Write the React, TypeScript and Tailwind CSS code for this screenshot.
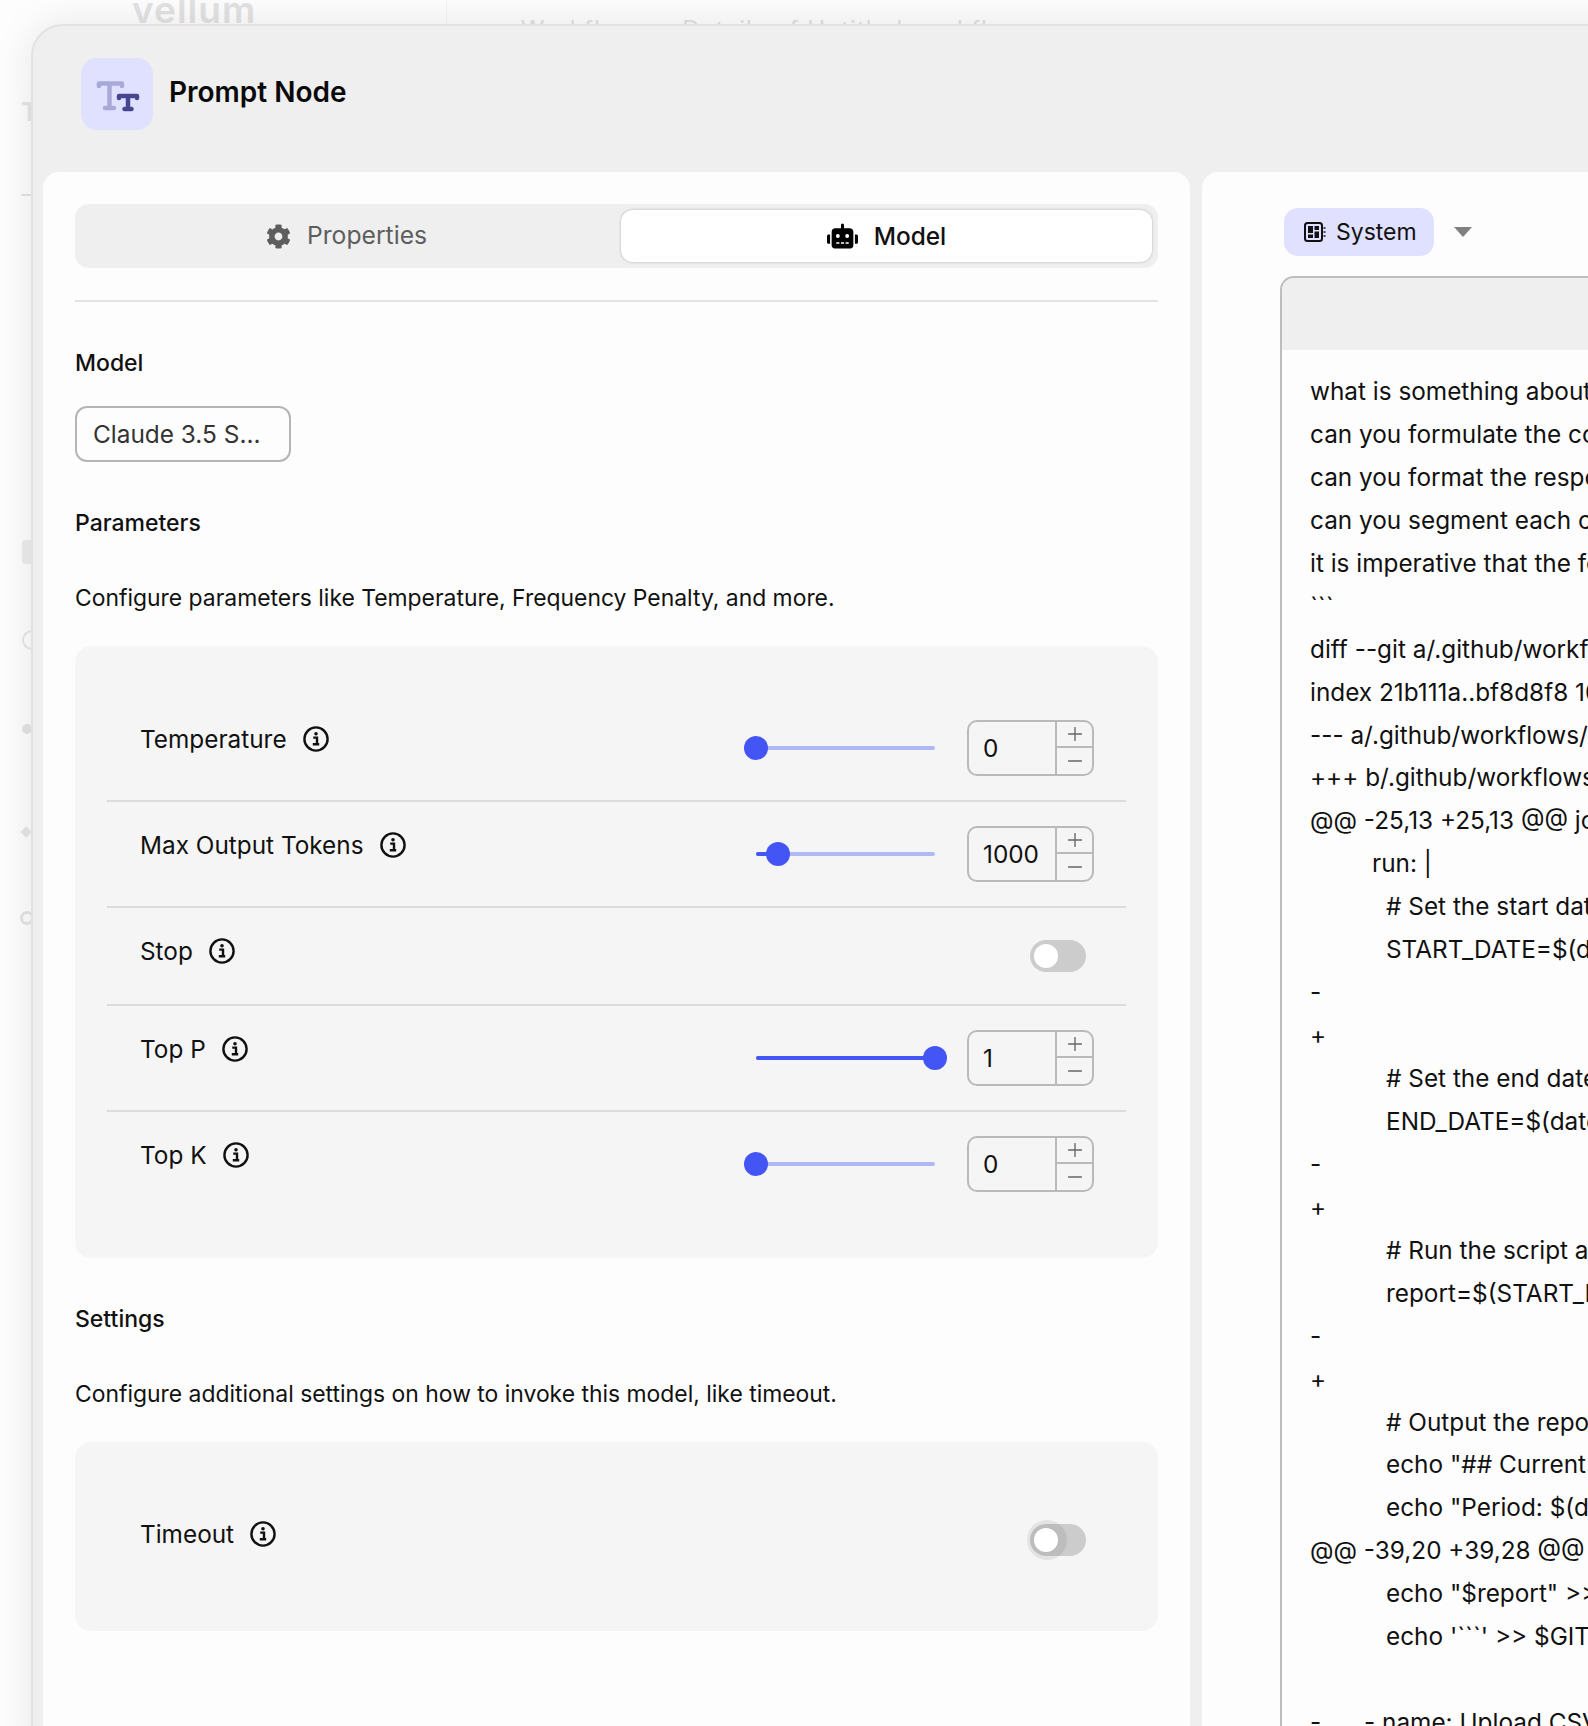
import { Minus, Plus } from 'lucide-react';
import { FaCog, FaRobot } from 'react-icons/fa';

type SliderRow = { label: string; value: string; fraction: number };

const editorLines: { text: string; indent?: string }[] = [
  { text: 'what is something about this change' },
  { text: 'can you formulate the comment' },
  { text: 'can you format the response' },
  { text: 'can you segment each change' },
  { text: 'it is imperative that the format' },
  { text: '```' },
  { text: 'diff --git a/.github/workflows/report.yml' },
  { text: 'index 21b111a..bf8d8f8 100644' },
  { text: '--- a/.github/workflows/report.yml' },
  { text: '+++ b/.github/workflows/report.yml' },
  { text: '@@ -25,13 +25,13 @@ jobs:' },
  { text: 'run: |', indent: 'pl-[62px]' },
  { text: '# Set the start date', indent: 'pl-[76px]' },
  { text: 'START_DATE=$(date', indent: 'pl-[76px]' },
  { text: '-' },
  { text: '+' },
  { text: '# Set the end date', indent: 'pl-[76px]' },
  { text: 'END_DATE=$(date', indent: 'pl-[76px]' },
  { text: '-' },
  { text: '+' },
  { text: '# Run the script and', indent: 'pl-[76px]' },
  { text: 'report=$(START_DATE', indent: 'pl-[76px]' },
  { text: '-' },
  { text: '+' },
  { text: '# Output the report', indent: 'pl-[76px]' },
  { text: 'echo "## Current', indent: 'pl-[76px]' },
  { text: 'echo "Period: $(date', indent: 'pl-[76px]' },
  { text: '@@ -39,20 +39,28 @@ jobs:' },
  { text: 'echo "$report" >> $GITHUB', indent: 'pl-[76px]' },
  { text: "echo '```' >> $GITHUB", indent: 'pl-[76px]' },
  { text: '' },
];

function InfoIcon() {
  return (
    <svg viewBox="0 0 26 26" className="h-[26px] w-[26px] shrink-0" fill="none">
      <circle cx="13" cy="13" r="11.6" stroke="#111" strokeWidth="2.400" />
      <circle cx="13" cy="7.800" r="1.800" fill="#111" />
      <path d="M10.200 11.600h3.800v6.200M9.800 18.200h6.400" stroke="#111" strokeWidth="2.400" />
    </svg>
  );
}

function TextSizeIcon() {
  return (
    <svg viewBox="0 0 72 72" className="h-[72px] w-[72px]" fill="none" strokeLinecap="round" strokeLinejoin="round">
      <path d="M18 28v-2.500h23V28M28.500 26v24M24 50h9" stroke="#a9a9d9" strokeWidth="4.500" />
      <path d="M38 40v-2h18v2M47 38v13M43.500 51h7" stroke="#47478f" strokeWidth="4.500" />
    </svg>
  );
}

function SystemIcon() {
  return (
    <svg viewBox="0 0 22 20" className="h-[20px] w-[22px] shrink-0" fill="none">
      <rect x="1" y="1" width="17" height="18" rx="2.500" stroke="#111" strokeWidth="2" />
      <path d="M4 4h5v7H4zM10.500 4H15v4h-4.500zM10.500 9.500H15V16h-4.500zM4 12.500h5V16H4z" fill="#111" />
      <path d="M19.500 6h2M19.500 10h2M19.500 14h2" stroke="#111" strokeWidth="1.500" />
    </svg>
  );
}

function Label({ text }: { text: string }) {
  return (
    <div className="flex items-center gap-[16px] text-[24.35px] leading-[32px] text-[#111]">
      <span>{text}</span>
      <InfoIcon />
    </div>
  );
}

function Slider({ fraction }: { fraction: number }) {
  return (
    <div className="relative h-[24px] w-[179px]">
      <div className="absolute left-0 right-0 top-[10px] h-[4px] rounded-full bg-[#b1b9f5]" />
      <div
        className="absolute left-0 top-[10px] h-[4px] rounded-full bg-[#4356f5]"
        style={{ width: `${fraction * 100}%` }}
      />
      <div
        className="absolute top-0 h-[24px] w-[24px] rounded-full bg-[#4356f5]"
        style={{ left: `${fraction * 179 - 12}px` }}
      />
    </div>
  );
}

function NumberInput({ value }: { value: string }) {
  return (
    <div className="flex h-[56px] w-[127px] overflow-hidden rounded-[10px] border-2 border-[#bababa]">
      <div className="flex-1 pl-[14px] text-[24.35px] leading-[52px] text-[#111]">{value}</div>
      <div className="flex w-[37px] flex-col border-l-2 border-[#bababa] text-[#666]">
        <div className="flex h-[26px] items-center justify-center border-b-2 border-[#bababa]">
          <Plus className="h-[22px] w-[22px]" strokeWidth={1.500} />
        </div>
        <div className="flex flex-1 items-center justify-center">
          <Minus className="h-[22px] w-[22px]" strokeWidth={1.500} />
        </div>
      </div>
    </div>
  );
}

function Toggle({ focused }: { focused?: boolean }) {
  return (
    <div className="relative h-[32px] w-[56px] rounded-full bg-[#cccccc]">
      {focused && <div className="absolute -left-[3px] -top-[4px] h-[40px] w-[40px] rounded-full bg-[#00000012]" />}
      <div className="absolute left-[4px] top-[4px] h-[24px] w-[24px] rounded-full bg-white" />
    </div>
  );
}

function ParamSlider({ row, divider }: { row: SliderRow; divider: boolean }) {
  return (
    <div className={`flex h-[106px] items-start justify-between pl-[33px] pr-[32px] pt-[24px] ${divider ? 'border-b-2 border-[#dcdcdc]' : ''}`}>
      <div className="pt-[3px]">
        <Label text={row.label} />
      </div>
      <div className="flex h-[56px] items-center gap-[32px]">
        <Slider fraction={row.fraction} />
        <NumberInput value={row.value} />
      </div>
    </div>
  );
}

export default function App() {
  return (
    <div className="relative h-[1726px] w-[1588px] overflow-hidden bg-[#fdfdfd] font-['Inter',sans-serif]">
      {/* page behind the modal, barely visible */}
      <div className="absolute left-[132px] top-[-13px] text-[37px] font-semibold leading-[46px] tracking-[1px] text-[#e2e2e2]">
        vellum
      </div>
      <div className="absolute left-[446px] top-0 h-[24px] w-px bg-[#f3f3f3]" />
      <div className="absolute left-[496px] top-[16px] text-[24px] leading-[28px] tracking-[1px] text-[#e0e0e0]">
        &gt; Workflows &gt; Details of Untitled workflow
      </div>
      <div className="absolute left-[21px] top-[96px] text-[26px] font-bold leading-[32px] text-[#e6e6e6]">T</div>
      <div className="absolute left-[21px] top-[194px] h-[2px] w-[12px] bg-[#e4e4e4]" />
      <div className="absolute left-[22px] top-[540px] h-[24px] w-[12px] rounded-[3px] bg-[#ececec]" />
      <div className="absolute left-[22px] top-[630px] h-[20px] w-[14px] rounded-l-full border-2 border-[#e6e6e6]" />
      <div className="absolute left-[22px] top-[724px] h-[10px] w-[10px] rounded-full bg-[#e4e4e4]" />
      <div className="absolute left-[22px] top-[828px] h-[8px] w-[8px] rotate-45 bg-[#e6e6e6]" />
      <div className="absolute left-[20px] top-[911px] h-[14px] w-[14px] rounded-full border-[3px] border-[#e4e4e4]" />

      <div className="absolute left-[31px] top-[24px] h-[1760px] w-[1700px] rounded-[32px] border-2 border-[#e2e2e2] bg-[#efefef] shadow-[0_0_40px_rgba(0,0,0,0.09)]">
        <div className="flex h-[146px] items-start gap-[16px] pl-[48px] pt-[32px]">
          <div className="flex h-[72px] w-[72px] items-center justify-center rounded-[16px] bg-[#e0e0ff]">
            <TextSizeIcon />
          </div>
          <div className="pt-[16px] text-[28px] font-semibold leading-[36px] text-[#0a0a0a]">Prompt Node</div>
        </div>

        <div className="flex gap-[12px] pl-[10px]">
          <div className="h-[1600px] w-[1147px] shrink-0 rounded-t-[16px] bg-[#fdfdfd] px-[32px] pt-[32px]">
            <div className="flex h-[64px] rounded-[14px] bg-[#efefef] p-[6px]">
              <div className="flex flex-1 items-center justify-center gap-[16px] pr-[9px] text-[24.7px] text-[#5e5e5e]">
                <FaCog className="h-[25px] w-[25px]" />
                <span>Properties</span>
              </div>
              <div className="flex w-[531px] items-center justify-center gap-[16px] rounded-[12px] bg-white text-[24.4px] font-medium text-[#111] shadow-[0_0_3px_rgba(0,0,0,0.25)]">
                <FaRobot className="h-[28px] w-[31px] text-black" />
                <span>Model</span>
              </div>
            </div>
            <div className="mt-[32px] h-[2px] bg-[#e3e3e3]" />

            <div className="mt-[45px] text-[23px] font-medium leading-[32px] text-[#111]">Model</div>
            <div className="mt-[27px] flex h-[56px] w-[216px] items-center rounded-[12px] border-2 border-[#b5b5b5] pl-[16px] text-[24.4px] text-[#333]">
              Claude 3.5 S...
            </div>

            <div className="mt-[45px] text-[23px] font-medium leading-[32px] text-[#111]">Parameters</div>
            <div className="mt-[43px] text-[22.9px] leading-[32px] text-[#111]">
              Configure parameters like Temperature, Frequency Penalty, and more.
            </div>
            <div className="mt-[32px] h-[612px] rounded-[16px] bg-[#f5f5f5] px-[32px] pt-[50px]">
              <ParamSlider row={{ label: 'Temperature', value: '0', fraction: 0 }} divider />
              <ParamSlider row={{ label: 'Max Output Tokens', value: '1000', fraction: 0.122 }} divider />
              <div className="flex h-[98px] items-start justify-between border-b-2 border-[#dcdcdc] pl-[33px] pr-[40px] pt-[27px]">
                <Label text="Stop" />
                <div className="pt-[5px]">
                  <Toggle />
                </div>
              </div>
              <ParamSlider row={{ label: 'Top P', value: '1', fraction: 1 }} divider />
              <ParamSlider row={{ label: 'Top K', value: '0', fraction: 0 }} divider={false} />
            </div>

            <div className="mt-[45px] text-[23px] font-medium leading-[32px] text-[#111]">Settings</div>
            <div className="mt-[43px] text-[22.9px] leading-[32px] text-[#111]">
              Configure additional settings on how to invoke this model, like timeout.
            </div>
            <div className="mt-[32px] flex h-[189px] items-start justify-between rounded-[16px] bg-[#f5f5f5] pl-[65px] pr-[72px] pt-[76px]">
              <Label text="Timeout" />
              <div className="pt-[6px]">
                <Toggle focused />
              </div>
            </div>
          </div>

          <div className="h-[1600px] flex-1 rounded-t-[16px] bg-[#fdfdfd] pl-[78px] pt-[36px]">
            <div className="ml-[4px] flex items-center gap-[20px]">
              <div className="flex h-[48px] w-[150px] items-center gap-[10px] rounded-[14px] bg-[#e0e0ff] pl-[20px] text-[23px] text-[#111]">
                <SystemIcon />
                <span>System</span>
              </div>
              <div className="h-0 w-0 border-x-[9.500px] border-t-[10px] border-x-transparent border-t-[#808080]" />
            </div>
            <div className="mt-[20px] h-[1500px] rounded-tl-[14px] border-l-2 border-t-2 border-[#bdbdbd]">
              <div className="h-[72px] rounded-tl-[12px] bg-[#efefef]" />
              <div className="whitespace-pre pl-[28px] pt-[20px] text-[24.35px] leading-[43px] text-[#111]">
                {editorLines.map((line, i) => (
                  <div key={i} className={`h-[42.95px] ${line.indent ?? ''}`}>
                    {line.text}
                  </div>
                ))}
                <div className="flex h-[43px]">
                  <span className="w-[54px]">-</span>
                  <span>- name: Upload CSV</span>
                </div>
              </div>
            </div>
          </div>
        </div>
      </div>
    </div>
  );
}
